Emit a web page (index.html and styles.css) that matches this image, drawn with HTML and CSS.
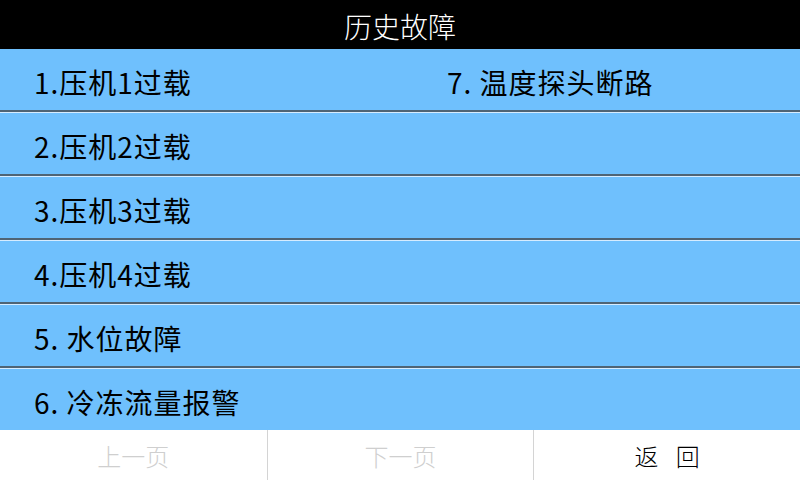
FILE: index.html
```html
<!DOCTYPE html>
<html lang="zh-CN">
<head>
  <meta charset="UTF-8" />
  <meta name="viewport" content="width=device-width, initial-scale=1.0"/>
  <title>历史故障</title>

  <link rel="stylesheet" href="styles.css">
</head>
<body>
  <div class="screen">
    <header class="title-bar">历史故障</header>

    <ul class="fault-list">
      <li class="fault-row">
        <span class="fault">1.压机1过载</span>
        <span class="fault fault-right">7. 温度探头断路</span>
      </li>
      <li class="fault-row">
        <span class="fault">2.压机2过载</span>
      </li>
      <li class="fault-row">
        <span class="fault">3.压机3过载</span>
      </li>
      <li class="fault-row">
        <span class="fault">4.压机4过载</span>
      </li>
      <li class="fault-row">
        <span class="fault">5. 水位故障</span>
      </li>
      <li class="fault-row">
        <span class="fault">6. 冷冻流量报警</span>
      </li>
    </ul>

    <nav class="pager">
      <button class="pager-btn" disabled>上一页</button>
      <button class="pager-btn" disabled>下一页</button>
      <button class="pager-btn pager-back">返 回</button>
    </nav>
  </div>
</body>
</html>
```

FILE: styles.css
```css
:root {
  --row-color: #6fc0fd;
  --line-dark: #4f6475;
  --line-light: #d6ecff;
  --pager-line: #d4d4d4;
  --muted-text: #cfcfcf;
  --font: "Noto Sans CJK SC", "Noto Sans", sans-serif;
}

* {
  box-sizing: border-box;
}

body {
  margin: 0;
  background: #fff;
  font-family: var(--font);
}

.screen {
  width: 800px;
  height: 480px;
  display: flex;
  flex-direction: column;
  overflow: hidden;
}

.title-bar {
  height: 49px;
  background: #000;
  color: #fff;
  font-size: 28px;
  font-weight: 300;
  line-height: 49px;
  text-align: center;
  padding-top: 2px;
}

.fault-list {
  list-style: none;
  margin: 0;
  padding: 0;
}

/* each row: 61px band, 2px dark rule, 1px light rule on the next row */
.fault-row {
  height: 63px;
  display: grid;
  grid-template-columns: 400px 400px;
  align-items: center;
  padding: 4px 0 0 34px;
  background: var(--row-color);
  border-bottom: 2px solid var(--line-dark);
  color: #000;
  font-size: 28px;
  letter-spacing: 1px;
}

.fault-row + .fault-row {
  height: 64px;
  border-top: 1px solid var(--line-light);
}

.fault-row:last-child {
  height: 62px;
  border-bottom: none;
}

.fault-right {
  padding-left: 13px;
}

.pager {
  flex: 1;
  display: grid;
  grid-template-columns: repeat(3, 1fr);
  background: #fff;
}

.pager-btn {
  border: none;
  border-left: 1px solid var(--pager-line);
  background: #fff;
  font-family: var(--font);
  font-size: 24px;
  font-weight: 300;
  color: #000;
  padding: 0;
  cursor: pointer;
}

.pager-btn:first-child {
  border-left: none;
}

.pager-btn:disabled {
  color: var(--muted-text);
  cursor: default;
}

.pager-back {
  letter-spacing: 6px;
  padding-left: 6px;
}
```
